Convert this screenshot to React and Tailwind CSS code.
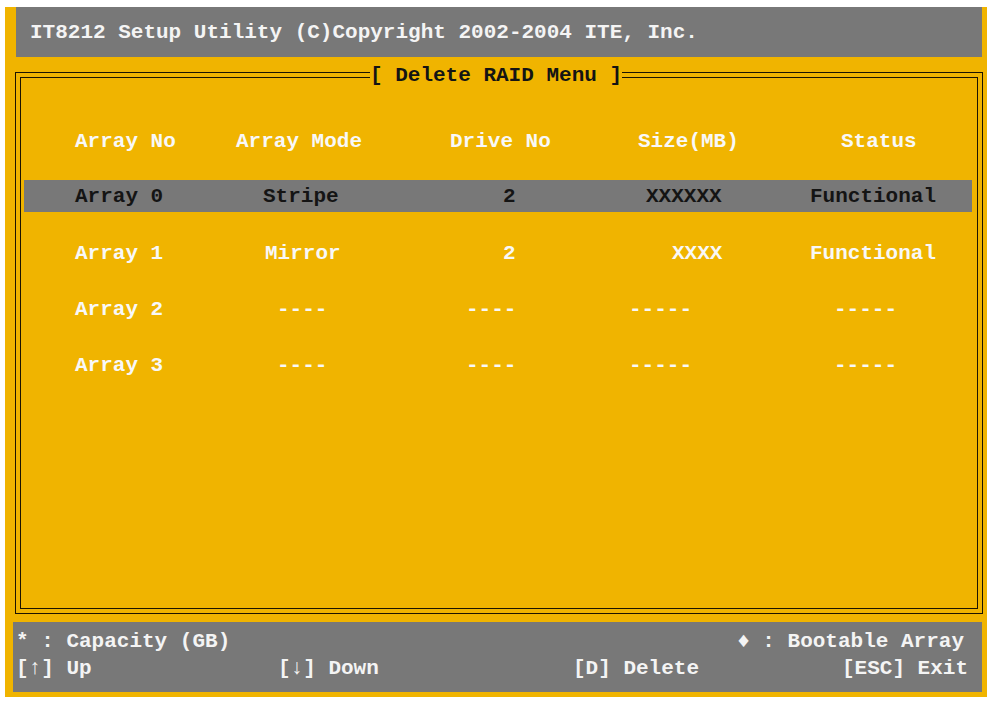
const rows = [
  { hl: true, mt: 23, cells: [["Array 0", 51], ["Stripe", 33], ["2", 83], ["XXXXXX", 46], ["Functional", 10]] },
  { hl: false, mt: 25, cells: [["Array 1", 51], ["Mirror", 35], ["2", 83], ["XXXX", 72], ["Functional", 10]] },
  { hl: false, mt: 24, cells: [["Array 2", 51], ["----", 47], ["----", 46], ["-----", 29], ["-----", 34]] },
  { hl: false, mt: 24, cells: [["Array 3", 51], ["----", 47], ["----", 46], ["-----", 29], ["-----", 34]] },
];

const head = [["Array No", 51], ["Array Mode", 6], ["Drive No", 30], ["Size(MB)", 38], ["Status", 41]];

function Row({ cells, hl, textCls, mt }) {
  return (
    <div
      className={`grid w-[948px] grid-cols-[206px_190px_180px_200px_172px] h-8 items-center ${
        hl ? "bg-[#787878]" : ""
      }`}
      style={{ marginTop: mt }}
    >
      {cells.map(([t, pl], i) => (
        <div key={i} className={`whitespace-pre ${textCls}`} style={{ paddingLeft: pl }}>
          {t}
        </div>
      ))}
    </div>
  );
}

export default function App() {
  return (
    <div
      className="w-[992px] h-[704px] bg-white pt-[7px] pl-[5px] text-[21px] font-bold leading-[27px]"
      style={{ fontFamily: '"Liberation Mono", "DejaVu Sans Mono", monospace' }}
    >
      <div className="w-[982px] h-[690px] bg-[#f0b400] flex flex-col">
        {/* header */}
        <div className="ml-[11px] mr-[5px] h-[50px] bg-[#787878] flex items-center pl-[14px] text-[#f4f4f4] whitespace-pre">
          IT8212 Setup Utility (C)Copyright 2002-2004 ITE, Inc.
        </div>

        {/* frame */}
        <div className="relative mt-[15px] ml-[10px] mr-[4px] h-[542px] border border-[#1c1400] p-[4px]">
          <div className="h-full border border-[#1c1400] pl-[3px] pt-[47px]">
            <div className="flex flex-col">
              <Row cells={head} hl={false} textCls="text-[#f8f8f8]" mt={0} />
              {rows.map((r, i) => (
                <Row key={i} cells={r.cells} hl={r.hl} mt={r.mt} textCls={r.hl ? "text-[#141414]" : "text-[#f8f8f8]"} />
              ))}
            </div>
          </div>
          <div className="absolute left-[354px] top-[-11px] bg-[#f0b400] text-[#141414] whitespace-pre leading-[27px]">
            [ Delete RAID Menu ]
          </div>
        </div>

        {/* footer */}
        <div className="mt-[8px] ml-[8px] mr-[5px] h-[70px] bg-[#787878] pt-[6px] pl-[3px] pr-[14px] text-[#f4f4f4]">
          <div className="flex whitespace-pre">
            <span>* : Capacity (GB)</span>
            <span className="ml-auto pr-[4px]">♦ : Bootable Array</span>
          </div>
          <div className="flex whitespace-pre">
            <span className="w-[262px]">[↑] Up</span>
            <span className="w-[295px]">[↓] Down</span>
            <span>[D] Delete</span>
            <span className="ml-auto">[ESC] Exit</span>
          </div>
        </div>
      </div>
    </div>
  );
}
